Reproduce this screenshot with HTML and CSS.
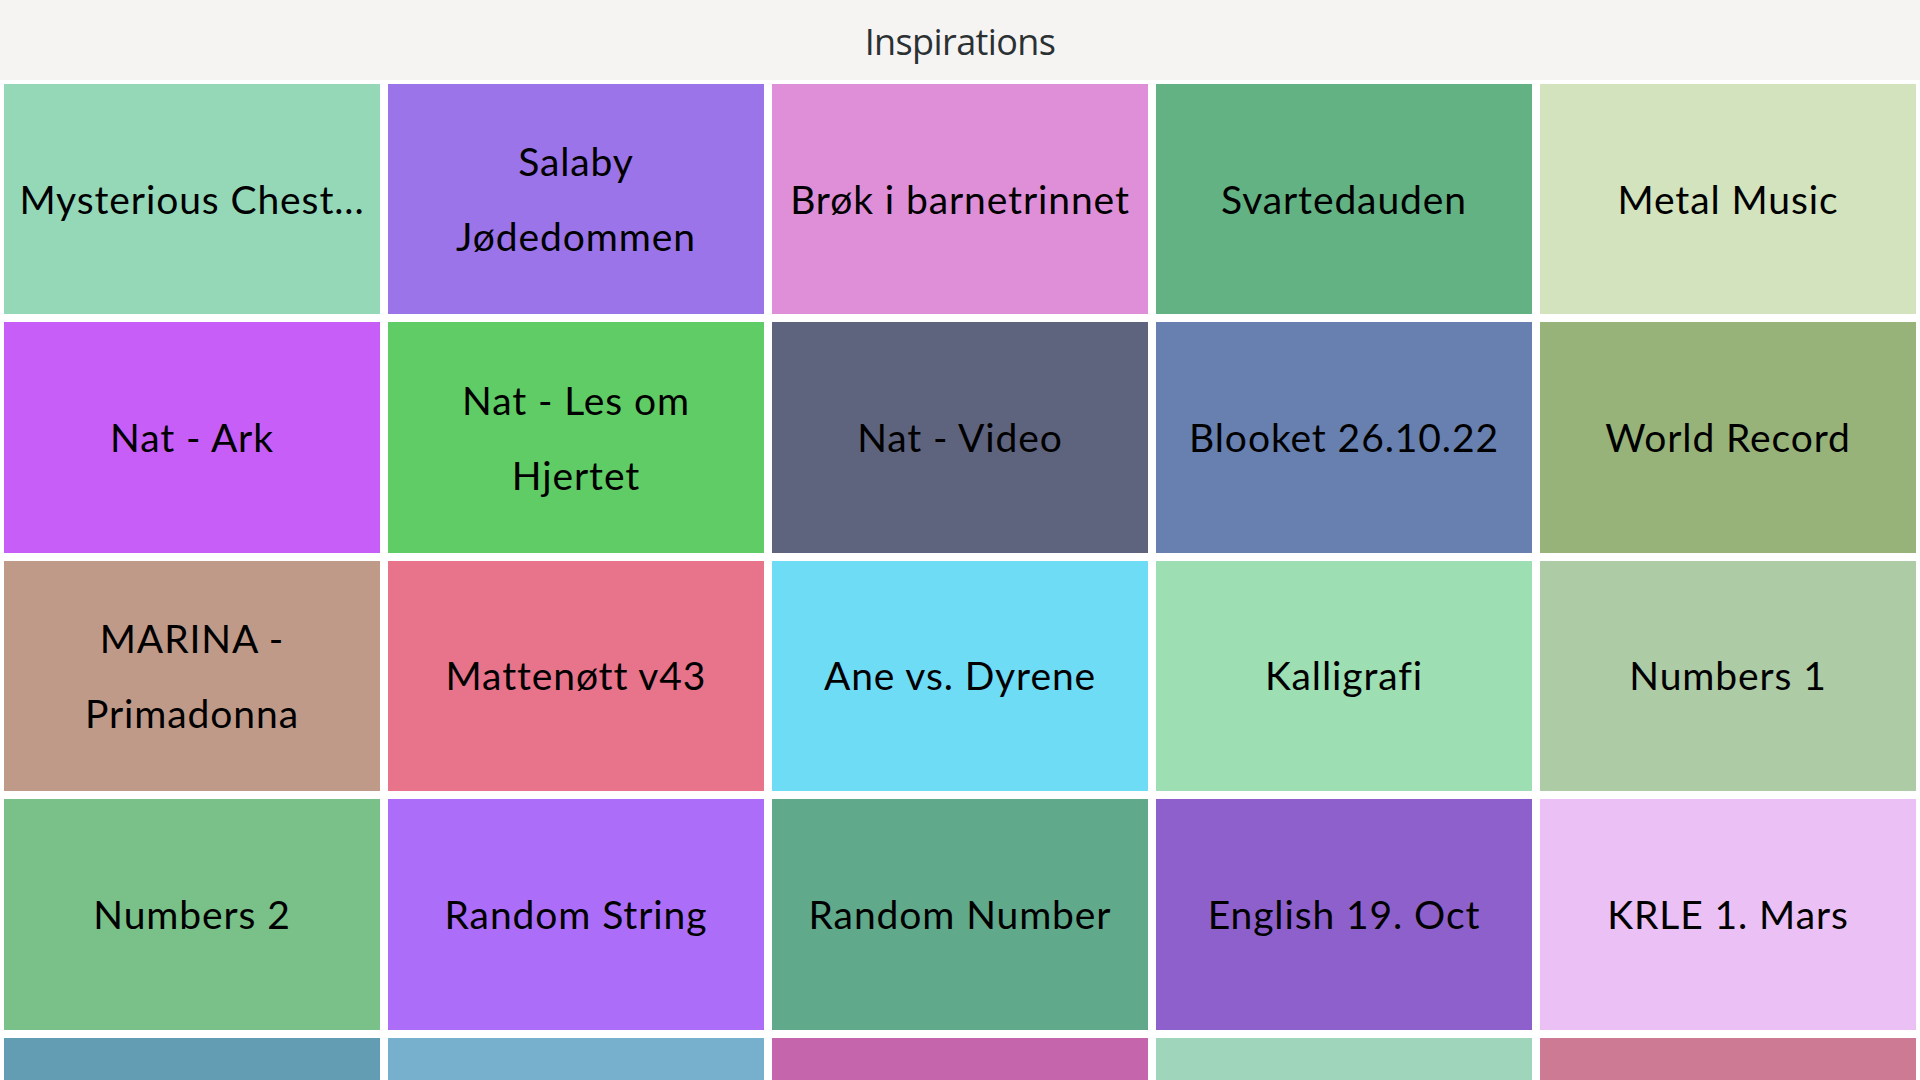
FILE: index.html
```html
<!DOCTYPE html>
<html lang="no">
<head>
<meta charset="utf-8">
<title>Inspirations</title>
<link rel="stylesheet" href="styles.css">
</head>
<body>
<header class="topbar"><h1 class="title">Inspirations</h1></header>
<main class="grid">
  <div class="tile c-mint"><span>Mysterious Chest...</span></div>
  <div class="tile c-purple"><span>Salaby Jødedommen</span></div>
  <div class="tile c-pink"><span>Brøk i barnetrinnet</span></div>
  <div class="tile c-green"><span>Svartedauden</span></div>
  <div class="tile c-pale"><span>Metal Music</span></div>

  <div class="tile c-violet"><span>Nat - Ark</span></div>
  <div class="tile c-lime"><span>Nat - Les om Hjertet</span></div>
  <div class="tile c-slate"><span>Nat - Video</span></div>
  <div class="tile c-blue"><span>Blooket 26.10.22</span></div>
  <div class="tile c-olive"><span>World Record</span></div>

  <div class="tile c-tan"><span>MARINA - Primadonna</span></div>
  <div class="tile c-rose"><span>Mattenøtt v43</span></div>
  <div class="tile c-cyan"><span>Ane vs. Dyrene</span></div>
  <div class="tile c-lmint"><span>Kalligrafi</span></div>
  <div class="tile c-sage"><span>Numbers 1</span></div>

  <div class="tile c-green2"><span>Numbers 2</span></div>
  <div class="tile c-purple2"><span>Random String</span></div>
  <div class="tile c-teal"><span>Random Number</span></div>
  <div class="tile c-purple3"><span>English 19. Oct</span></div>
  <div class="tile c-lavender"><span>KRLE 1. Mars</span></div>

  <div class="tile c-steel"><span></span></div>
  <div class="tile c-sky"><span></span></div>
  <div class="tile c-magenta"><span></span></div>
  <div class="tile c-seafoam"><span></span></div>
  <div class="tile c-mauve"><span></span></div>
</main>
</body>
</html>
```
FILE: styles.css
```css
* { box-sizing: border-box; }
html, body { margin: 0; padding: 0; background: #ffffff; }
body { font-family: Lato, "Noto Sans", sans-serif; }

.topbar {
  height: 80px;
  background: #f5f4f2;
  display: flex;
  align-items: center;
  justify-content: center;
}
.title {
  margin: 0;
  font-family: "Open Sans", "Noto Sans", sans-serif;
  font-weight: 400;
  font-size: 36px;
  letter-spacing: -0.6px;
  color: #2b3133;
  line-height: 1;
  padding-top: 4px;
}

.grid {
  display: grid;
  grid-template-columns: repeat(5, 1fr);
  grid-auto-rows: 12vw;
  gap: 8px;
  padding: 4px;
}
.tile {
  display: flex;
  align-items: center;
  justify-content: center;
  text-align: center;
  padding: 0 10px;
  color: #000;
  font-size: 39px;
  letter-spacing: 0.9px;
  line-height: 75px;
  overflow: hidden;
}
.tile span { display: block; }

.c-mint { background: #95d8b8; }
.c-purple { background: #9a74e8; }
.c-pink { background: #df8fd8; }
.c-green { background: #63b283; }
.c-pale { background: #d2e3bd; }

.c-violet { background: #c75ef7; }
.c-lime { background: #60cc65; }
.c-slate { background: #5e637e; }
.c-blue { background: #6780b0; }
.c-olive { background: #98b37a; }

.c-tan { background: #c09a89; }
.c-rose { background: #e8748b; }
.c-cyan { background: #6fdcf6; }
.c-lmint { background: #9ddfb3; }
.c-sage { background: #adcba5; }

.c-green2 { background: #79c189; }
.c-purple2 { background: #ac6ef9; }
.c-teal { background: #60a98b; }
.c-purple3 { background: #8e60cc; }
.c-lavender { background: #ebc0f5; }

.c-steel { background: #639db3; }
.c-sky { background: #76b0cc; }
.c-magenta { background: #c566ac; }
.c-seafoam { background: #9fd6bb; }
.c-mauve { background: #cd7b95; }
```
